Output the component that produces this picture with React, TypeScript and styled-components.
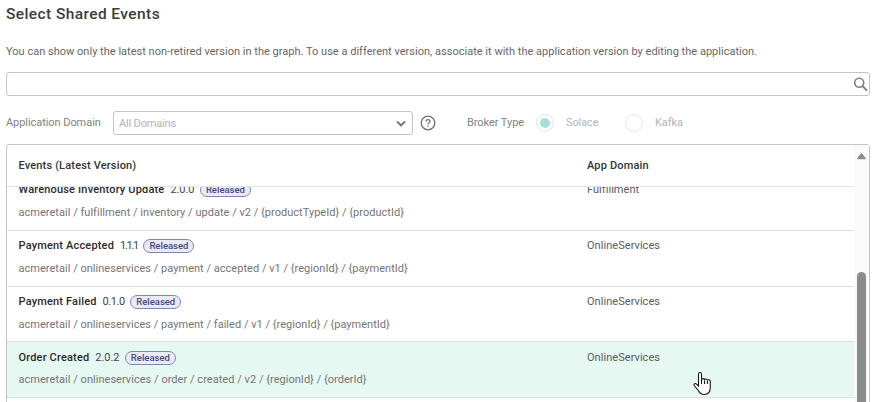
import React from 'react';
import styled, { createGlobalStyle } from 'styled-components';

const GlobalStyle = createGlobalStyle`
  * { box-sizing: border-box; }
  body { margin: 0; background: #fff; overflow: hidden; }
`;

const Page = styled.main`
  display: flex;
  flex-direction: column;
  width: 875px;
  height: 402px;
  padding: 0 5px 0 6px;
  overflow: hidden;
  font: 400 11px/16px Roboto, sans-serif;
  color: #5c5c5c;
`;

const Title = styled.h1`
  margin: 4px 0 0;
  font-size: 15.5px;
  font-weight: 500;
  line-height: 20px;
  letter-spacing: 0.41px;
  color: #3c3c3c;
`;

const Description = styled.p`
  margin: 20px 0 0;
  line-height: 16px;
  letter-spacing: 0.016px;
  white-space: nowrap;
  color: #666;
`;

const SearchBox = styled.label`
  display: flex;
  flex: none;
  align-items: center;
  justify-content: flex-end;
  height: 24px;
  margin-top: 12px;
  padding-right: 1px;
  border: 1px solid #c4c4c4;
  border-radius: 3px;
`;

const Filters = styled.div`
  display: flex;
  flex: none;
  align-items: center;
  height: 24px;
  margin-top: 15px;
`;

const FilterLabel = styled.span<{ $width: number }>`
  width: ${(p) => p.$width}px;
  letter-spacing: -0.06px;
  color: #828282;
`;

const Select = styled.div`
  display: flex;
  align-items: center;
  justify-content: space-between;
  width: 300px;
  height: 24px;
  padding: 2px 5px 0;
  border: 1px solid #c4c4c4;
  border-radius: 3px;
  letter-spacing: -0.16px;
  color: #b4b4b4;
`;

const HelpIcon = styled.svg`
  flex: none;
  margin: 0 31px 0 7px;
`;

const RadioOption = styled.span<{ $width: number }>`
  display: flex;
  align-items: center;
  gap: 12px;
  width: ${(p) => p.$width}px;
  letter-spacing: -0.1px;
  color: #b4b4b4;
`;

const Radio = styled.span<{ $checked?: boolean }>`
  display: grid;
  place-items: center;
  width: 18px;
  height: 18px;
  border: 1px solid #e6e6e6;
  border-radius: 50%;

  &::after {
    content: '';
    width: 10px;
    height: 10px;
    border-radius: 50%;
    background: ${(p) => (p.$checked ? '#a3e1d9' : 'transparent')};
  }
`;

const Table = styled.section`
  display: flex;
  flex: none;
  height: 280px;
  margin-top: 9px;
  border: 1px solid #c4c4c4;
  border-radius: 3px;
`;

const Columns = styled.div`
  flex: 1;
  overflow: hidden;
`;

const HeaderRow = styled.div`
  display: grid;
  grid-template-columns: 568.5px 1fr;
  align-items: center;
  height: 42px;
  padding-left: 11.5px;
  border-bottom: 1px solid #e3e3e3;
  font-weight: 500;
  letter-spacing: 0.16px;
  color: #333;
`;

const Body = styled.div`
  height: 236px;
  overflow: hidden;
`;

const Scrolled = styled.div`
  margin-top: -12px;
`;

const EventRow = styled.div<{ $height: number; $active?: boolean }>`
  display: grid;
  grid-template-columns: 568.5px 1fr;
  height: ${(p) => p.$height}px;
  padding: ${(p) => (p.$active ? 8 : 7)}px 0 0 11.5px;
  border-bottom: 1px solid #e0e0e0;
  background: ${(p) => (p.$active ? '#e6f8f2' : '#fff')};
`;

const EventHeading = styled.div`
  display: flex;
  align-items: center;
  height: 16px;
`;

const EventName = styled.span`
  font-weight: 500;
  letter-spacing: 0.17px;
  color: #2b2b2b;
`;

const Version = styled.span<{ $spacing: number }>`
  margin-left: 6px;
  letter-spacing: ${(p) => p.$spacing}px;
  color: #444;
`;

const Badge = styled.span`
  height: 14px;
  margin-left: 5.5px;
  padding: 0 5px;
  border: 1px solid #8286b4;
  border-radius: 7px;
  background: #eaeaf4;
  font-size: 9.5px;
  font-weight: 500;
  line-height: 11px;
  color: #474a7e;
`;

const Topic = styled.div<{ $tight?: boolean }>`
  margin-top: ${(p) => (p.$tight ? 6 : 7)}px;
  letter-spacing: ${(p) => (p.$tight ? 0.036 : 0.026)}px;
  white-space: nowrap;
  color: #757575;
`;

const Domain = styled.div`
  letter-spacing: 0.046px;
  color: #5c5c5c;
`;

const ScrollTrack = styled.div`
  display: flex;
  flex-direction: column;
  align-items: center;
  justify-content: space-between;
  width: 15px;
  padding-top: 8px;
  background: #fafafa;
`;

const ScrollThumb = styled.div`
  width: 9px;
  height: 151px;
  border-radius: 4.5px;
  background: #8b8b8b;
`;

const Cursor = styled.svg`
  position: absolute;
  left: 692px;
  top: 371px;
`;

interface EventItem {
  name: string;
  version: string;
  spacing: number;
  topic: string;
  domain: string;
  height: number;
  active?: boolean;
}

const events: EventItem[] = [
  { name: 'Warehouse Inventory Update', version: '2.0.0', spacing: -0.07, topic: 'acmeretail / fulfillment / inventory / update / v2 / {productTypeId} / {productId}', domain: 'Fulfillment', height: 56 },
  { name: 'Payment Accepted', version: '1.1.1', spacing: -1.3, topic: 'acmeretail / onlineservices / payment / accepted / v1 / {regionId} / {paymentId}', domain: 'OnlineServices', height: 56 },
  { name: 'Payment Failed', version: '0.1.0', spacing: -0.45, topic: 'acmeretail / onlineservices / payment / failed / v1 / {regionId} / {paymentId}', domain: 'OnlineServices', height: 55 },
  { name: 'Order Created', version: '2.0.2', spacing: -0.07, topic: 'acmeretail / onlineservices / order / created / v2 / {regionId} / {orderId}', domain: 'OnlineServices', height: 56, active: true },
];

export default function App() {
  return (
    <>
      <GlobalStyle />
      <Page>
        <Title>Select Shared Events</Title>
        <Description>
          You can show only the latest non-retired version in the graph. To use a different version, associate it with the application version by editing the application.
        </Description>
        <SearchBox>
          <svg width="15" height="15" viewBox="0 0 15 15" fill="none" stroke="#808080">
            <circle cx="6.2" cy="5.7" r="4.5" strokeWidth="1.6" />
            <path d="M9.400 9l4.700 4.700" strokeWidth="1.9" />
          </svg>
        </SearchBox>
        <Filters>
          <FilterLabel $width={107}>Application Domain</FilterLabel>
          <Select>
            <span>All Domains</span>
            <svg width="12" height="10" viewBox="0 0 12 10" fill="none" stroke="#757575" strokeWidth="1.8">
              <path d="M2 2.5l4 4 4-4" />
            </svg>
          </Select>
          <HelpIcon width="16" height="16" viewBox="0 0 16 16" fill="none" stroke="#707070">
            <circle cx="8" cy="8" r="6.8" strokeWidth="1.3" />
            <path d="M6 6.6C6 5.3 6.8 4.6 8 4.6s2 .7 2 1.7c0 1.4-2 1.5-2 3" strokeWidth="1.25" />
            <path d="M8 10.4v1.4" strokeWidth="1.4" />
          </HelpIcon>
          <FilterLabel $width={69}>Broker Type</FilterLabel>
          <RadioOption $width={89}>
            <Radio $checked />
            Solace
          </RadioOption>
          <RadioOption $width={60}>
            <Radio />
            Kafka
          </RadioOption>
        </Filters>
        <Table>
          <Columns>
            <HeaderRow>
              <span>Events (Latest Version)</span>
              <span>App Domain</span>
            </HeaderRow>
            <Body>
              <Scrolled>
                {events.map((e) => (
                  <EventRow key={e.name} $height={e.height} $active={e.active}>
                    <div>
                      <EventHeading>
                        <EventName>{e.name}</EventName>
                        <Version $spacing={e.spacing}>{e.version}</Version>
                        <Badge>Released</Badge>
                      </EventHeading>
                      <Topic $tight={e.active}>{e.topic}</Topic>
                    </div>
                    <Domain>{e.domain}</Domain>
                  </EventRow>
                ))}
              </Scrolled>
            </Body>
          </Columns>
          <ScrollTrack>
            <svg width="9" height="7" viewBox="0 0 9 7">
              <path d="M4.5 1L8 5.5H1z" fill="#8b8b8b" stroke="#8b8b8b" strokeLinejoin="round" strokeWidth="1.6" />
            </svg>
            <ScrollThumb />
          </ScrollTrack>
        </Table>
        <Cursor width="20" height="26" viewBox="0 0 20 26">
          <path
            d="M6.5 15V3.2C6.5 1 9.5 1 9.5 3.2V9c0-1.9 3-1.9 3 .2 0-1.7 2.9-1.5 2.9.5 0-1.5 2.9-1.3 2.9.8v5.800c0 4-2 7.200-6 7.200-3.200 0-4.700-1.500-6-4L2.200 14.500c-1-1.900 1.200-2.600 2.300-1.300z"
            fill="#fff"
            stroke="#14141e"
            strokeWidth="1.1"
          />
          <path d="M9.500 9v4M12.500 9.500v3.500M15.400 10v3" stroke="#14141e" strokeWidth="1.1" />
        </Cursor>
      </Page>
    </>
  );
}
